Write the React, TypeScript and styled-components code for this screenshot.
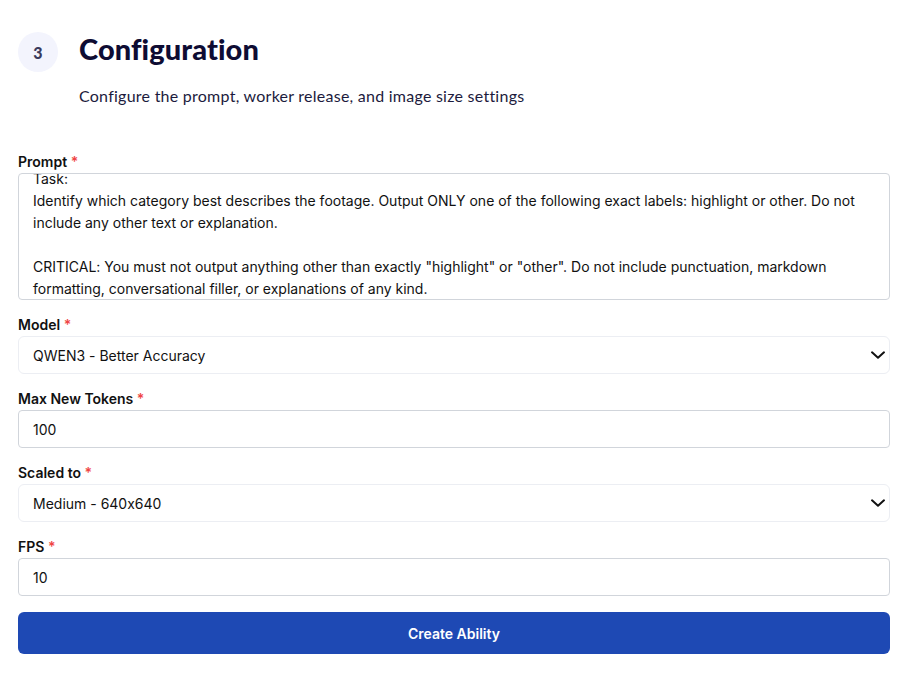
import React from "react";
import styled, { createGlobalStyle } from "styled-components";

const GlobalStyle = createGlobalStyle`
    body {
        margin: 0;
        background: #FFFFFF;
        font-family: "Inter", "Liberation Sans", Arial, sans-serif;
        font-feature-settings: "calt" 0;
        color: #111827;
    }
    * { box-sizing: border-box; }
`;

const PROMPT_TEXT = `Task:
Identify which category best describes the footage. Output ONLY one of the following exact labels: highlight or other. Do not include any other text or explanation.

CRITICAL: You must not output anything other than exactly "highlight" or "other". Do not include punctuation, markdown formatting, conversational filler, or explanations of any kind.`;

function Chevron() {
    return (
        <svg width="16" height="16" viewBox="0 0 24 24" fill="none" stroke="#111" strokeWidth="3" strokeLinecap="round" strokeLinejoin="round">
            <path d="M3 8l9 8 9-8" />
        </svg>
    );
}

type FieldProps = {
    label: string;
    children: React.ReactNode;
};

function Field({ label, children }: FieldProps) {
    return (
        <FieldGroup>
            <Label>
                {label} <Required>*</Required>
            </Label>
            {children}
        </FieldGroup>
    );
}

function App() {
    return (
        <>
            <GlobalStyle />
            <Page>
                <Header>
                    <StepBadge>3</StepBadge>
                    <HeaderText>
                        <Title>Configuration</Title>
                        <Subtitle>Configure the prompt, worker release, and image size settings</Subtitle>
                    </HeaderText>
                </Header>

                <Form onSubmit={(e) => e.preventDefault()}>
                    <Field label="Prompt">
                        <PromptBox>
                            <PromptText>{PROMPT_TEXT}</PromptText>
                        </PromptBox>
                    </Field>
                    <Field label="Model">
                        <SelectBox>
                            <span>QWEN3 - Better Accuracy</span>
                            <ChevronWrap><Chevron /></ChevronWrap>
                        </SelectBox>
                    </Field>
                    <Field label="Max New Tokens">
                        <TextInput type="text" defaultValue="100" />
                    </Field>
                    <Field label="Scaled to">
                        <SelectBox>
                            <span>Medium - 640x640</span>
                            <ChevronWrap><Chevron /></ChevronWrap>
                        </SelectBox>
                    </Field>
                    <Field label="FPS">
                        <TextInput type="text" defaultValue="10" />
                    </Field>
                    <SubmitButton type="submit">Create Ability</SubmitButton>
                </Form>
            </Page>
        </>
    );
}

const Page = styled.div`
    width: 913px;
    padding: 30px 23px 0 18px;
`

const Header = styled.div`
    display: flex;
    align-items: flex-start;
    gap: 21px;
`

const StepBadge = styled.div`
    width: 40px;
    height: 40px;
    margin-top: 2px;
    flex-shrink: 0;
    border-radius: 50%;
    background-color: #F3F4FD;
    color: #3A3A5C;
    display: flex;
    align-items: center;
    justify-content: center;
    font-family: "Lato", sans-serif;
    font-weight: 900;
    font-size: 16px;
`

const HeaderText = styled.div`
    display: flex;
    flex-direction: column;
`

const Title = styled.h1`
    margin: 0;
    font-family: "Lato", sans-serif;
    font-weight: 900;
    font-size: 29px;
    line-height: 38px;
    color: #0E0C33;
    letter-spacing: 0.1px;
`

const Subtitle = styled.p`
    margin: 18px 0 0 0;
    font-family: "Lato", sans-serif;
    font-size: 16px;
    line-height: 20px;
    color: #1C1B3D;
    letter-spacing: 0.25px;
`

const Form = styled.form`
    margin-top: 46px;
    display: flex;
    flex-direction: column;
    gap: 15px;
`

const FieldGroup = styled.div`
    display: flex;
    flex-direction: column;
    gap: 1px;
`

const Label = styled.label`
    font-size: 14px;
    line-height: 20px;
    font-weight: 600;
    color: #111111;
`

const Required = styled.span`
    color: #EF4444;
`

const PromptBox = styled.div`
    height: 127px;
    border: 1px solid #D1D5DB;
    border-radius: 4px;
    padding: 0 14px;
    overflow: hidden;
    background: #FFFFFF;
`

const PromptText = styled.div`
    margin-top: -6px;
    white-space: pre-wrap;
    font-size: 14px;
    line-height: 22px;
    color: #111111;
`

const SelectBox = styled.div`
    position: relative;
    height: 38px;
    border: 1px solid #ECEEF3;
    border-radius: 6px;
    padding: 0 14px;
    display: flex;
    align-items: center;
    font-size: 14px;
    color: #111111;
    background: #FFFFFF;
`

const ChevronWrap = styled.span`
    position: absolute;
    right: 3px;
    top: 10px;
    display: flex;
`

const TextInput = styled.input`
    height: 38px;
    border: 1px solid #D1D5DB;
    border-radius: 4px;
    padding: 0 14px;
    font-family: "Inter", "Liberation Sans", Arial, sans-serif;
    font-feature-settings: "calt" 0;
    font-size: 14px;
    color: #111111;
    background: #FFFFFF;
    outline: none;
`

const SubmitButton = styled.button`
    margin-top: 1px;
    height: 42px;
    border: none;
    border-radius: 6px;
    background-color: #1E49B4;
    color: #FFFFFF;
    font-family: "Inter", "Liberation Sans", Arial, sans-serif;
    font-size: 14px;
    font-weight: 600;
    cursor: pointer;
`

export default App;
